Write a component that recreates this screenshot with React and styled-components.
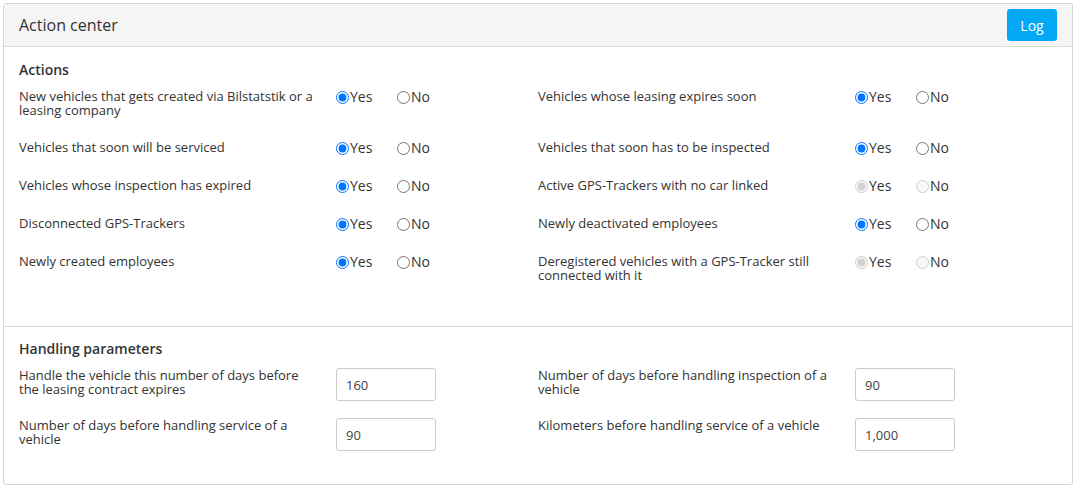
import React from "react";
import styled, { createGlobalStyle } from "styled-components";

const GlobalStyle = createGlobalStyle`
  * { box-sizing: border-box; }
  body {
    margin: 0;
    background: #fff;
    font-family: "Open Sans", "Liberation Sans", sans-serif;
    color: #333;
  }
`;

const ACTIONS = [
  [
    { label: "New vehicles that gets created via Bilstatstik or a leasing company", value: "yes" },
    { label: "Vehicles whose leasing expires soon", value: "yes" },
  ],
  [
    { label: "Vehicles that soon will be serviced", value: "yes" },
    { label: "Vehicles that soon has to be inspected", value: "yes" },
  ],
  [
    { label: "Vehicles whose inspection has expired", value: "yes" },
    { label: "Active GPS-Trackers with no car linked", value: "yes", disabled: true },
  ],
  [
    { label: "Disconnected GPS-Trackers", value: "yes" },
    { label: "Newly deactivated employees", value: "yes" },
  ],
  [
    { label: "Newly created employees", value: "yes" },
    { label: "Deregistered vehicles with a GPS-Tracker still connected with it", value: "yes", disabled: true },
  ],
];

const PARAMS = [
  [
    { label: "Handle the vehicle this number of days before the leasing contract expires", value: "160" },
    { label: "Number of days before handling inspection of a vehicle", value: "90" },
  ],
  [
    { label: "Number of days before handling service of a vehicle", value: "90" },
    { label: "Kilometers before handling service of a vehicle", value: "1,000" },
  ],
];

const Panel = styled.div`
  margin: 3px;
  border: 1px solid #d4d4d4;
  border-radius: 3px;
  background: #fff;
`;

const Header = styled.div`
  display: flex;
  align-items: center;
  justify-content: space-between;
  height: 43px;
  padding: 0 15px;
  background: #f5f5f5;
  border-bottom: 1px solid #dcdcdc;
`;

const Title = styled.div`
  font-size: 16px;
  color: #333;
`;

const LogButton = styled.button`
  width: 50px;
  height: 32px;
  border: none;
  border-radius: 3px;
  background: #03a9f4;
  color: #fff;
  font-family: inherit;
  font-size: 14px;
  cursor: pointer;
`;

const Section = styled.div`
  padding: ${(p) => p.$pad};
  border-bottom: ${(p) => (p.$divider ? "1px solid #dcdcdc" : "none")};
`;

const SectionTitle = styled.div`
  font-size: 14px;
  font-weight: 600;
  line-height: 20px;
  margin-bottom: 9px;
  color: #333;
`;

const Rows = styled.div`
  display: flex;
  flex-direction: column;
  gap: ${(p) => p.$gap}px;
`;

const Row = styled.div`
  display: grid;
  grid-template-columns: 1fr 1fr;
  align-items: start;
`;

const Cell = styled.div`
  display: flex;
  align-items: flex-start;
`;

const Label = styled.div`
  flex: 0 0 317px;
  padding-right: 19px;
  font-size: 13px;
  line-height: 14px;
  color: #333;
`;

const RadioGroup = styled.div`
  display: flex;
  align-items: center;
  margin-top: 1px;
`;

const Option = styled.label`
  display: flex;
  align-items: center;
  width: ${(p) => p.$width}px;
  height: 14px;
  font-size: 14px;
  line-height: 14px;
  color: #333;

  input {
    width: 13px;
    height: 13px;
    margin: 0 1px 0 0;
  }
`;

const NumberInput = styled.input`
  width: 100px;
  height: 33px;
  padding: 0 9px;
  border: 1px solid #ccc;
  border-radius: 3px;
  font-family: inherit;
  font-size: 13px;
  color: #444;
  outline: none;
`;

function ActionField({ item, name }) {
  return (
    <Cell>
      <Label>{item.label}</Label>
      <RadioGroup>
        <Option $width={61}>
          <input type="radio" name={name} defaultChecked={item.value === "yes"} disabled={item.disabled} />
          Yes
        </Option>
        <Option $width={40}>
          <input type="radio" name={name} defaultChecked={item.value === "no"} disabled={item.disabled} />
          No
        </Option>
      </RadioGroup>
    </Cell>
  );
}

function ParamField({ item }) {
  return (
    <Cell>
      <Label>{item.label}</Label>
      <NumberInput type="text" defaultValue={item.value} />
    </Cell>
  );
}

export default function App() {
  return (
    <>
      <GlobalStyle />
      <Panel>
        <Header>
          <Title>Action center</Title>
          <LogButton>Log</LogButton>
        </Header>
        <Section $pad="13px 15px 44px" $divider>
          <SectionTitle>Actions</SectionTitle>
          <Rows $gap={23}>
            {ACTIONS.map((row, i) => (
              <Row key={i}>
                {row.map((item, j) => (
                  <ActionField key={j} item={item} name={`action-${i}-${j}`} />
                ))}
              </Row>
            ))}
          </Rows>
        </Section>
        <Section $pad="12px 15px 33px">
          <SectionTitle>Handling parameters</SectionTitle>
          <Rows $gap={17}>
            {PARAMS.map((row, i) => (
              <Row key={i}>
                {row.map((item, j) => (
                  <ParamField key={j} item={item} />
                ))}
              </Row>
            ))}
          </Rows>
        </Section>
      </Panel>
    </>
  );
}
